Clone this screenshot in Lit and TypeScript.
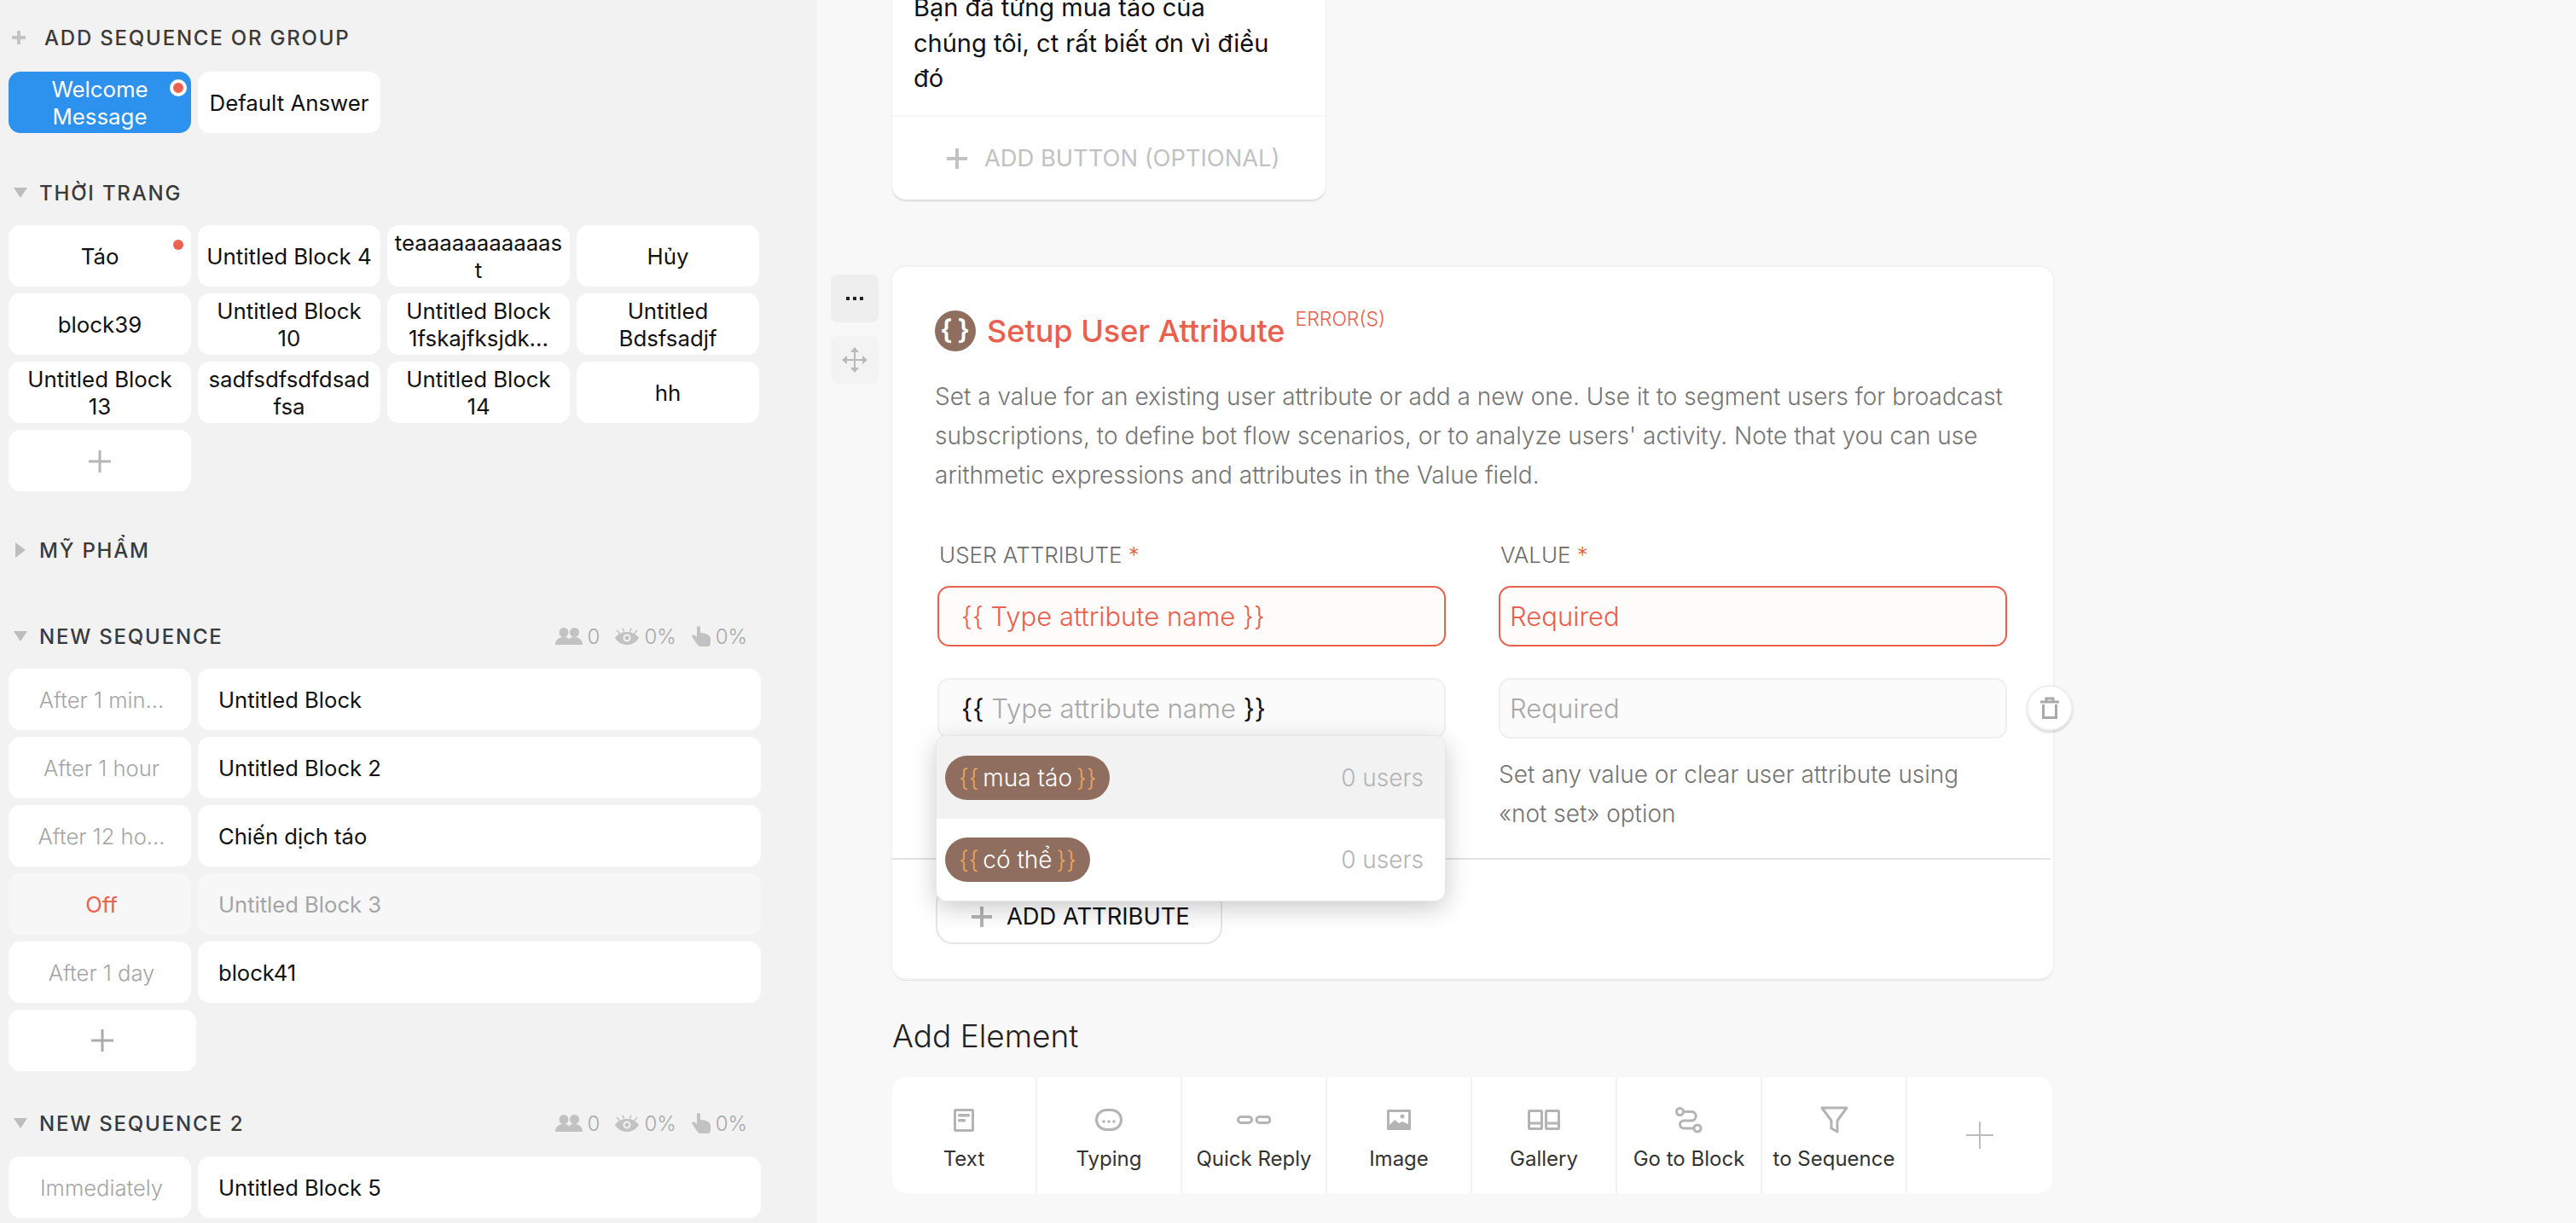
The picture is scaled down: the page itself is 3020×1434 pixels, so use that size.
import { LitElement, html, css, svg } from 'lit';
import { customElement } from 'lit/decorators.js';

const plus = (size: number, weight = 3) => html`<svg class="plus" width=${size} height=${size} viewBox="0 0 ${size} ${size}">
  <path d="M${size / 2} 0V${size}M0 ${size / 2}H${size}" stroke="currentColor" stroke-width=${weight} fill="none" />
</svg>`;

const groupIcon = html`<svg width="32" height="20" viewBox="0 0 32 20" fill="#c2c2c2">
  <circle cx="10" cy="5.500" r="5.500" /><circle cx="22.500" cy="5.500" r="5.500" />
  <path d="M0 20c0-5 3-8 8-9h4c2 .5 3 1.500 4 2.500 1-1 2-2 4-2.500h4c5 1 8 4 8 9z" />
</svg>`;

const eyeIcon = html`<svg width="28" height="20" viewBox="0 0 28 20">
  <path fill-rule="evenodd" fill="#c2c2c2" d="M0 12C4 6.500 9 5 14 5s10 1.500 14 7c-4 6-9 8-14 8S4 18 0 12zm14-4.500a4.500 4.500 0 1 0 0 9 4.500 4.500 0 0 0 0-9z" />
  <circle cx="14" cy="12" r="2.500" fill="#c2c2c2" />
  <path d="M2 3l3.500 4M9 .5l1.500 4M19 .5l-1.500 4M26 3l-3.500 4" stroke="#c2c2c2" stroke-width="1.500" />
</svg>`;

const handIcon = html`<svg width="22" height="24" viewBox="0 0 22 24" fill="#c2c2c2">
  <path d="M6 2a2 2 0 0 1 4 0v6c3 0 8 1 10 3 1 1 2 2 2 4v5c0 2-1 4-3 4H10c-2 0-3-1-4-3L.5 13c-1-2 1-3 3-2L6 13z" />
</svg>`;

const s = '#b4b4b4';
const elementIcons: Record<string, unknown> = {
  text: svg`<rect x="1.500" y="1.500" width="21" height="24" rx="1" fill="none" stroke=${s} stroke-width="3" />
    <rect x="5" y="6" width="14" height="3.500" rx="1.500" fill=${s} /><rect x="5" y="12" width="9" height="3.500" rx="1.500" fill=${s} />`,
  typing: svg`<rect x="1.500" y="1.500" width="29" height="23" rx="11.500" fill="none" stroke=${s} stroke-width="3" />
    <circle cx="10" cy="15" r="1.800" fill=${s} /><circle cx="16" cy="15" r="1.800" fill=${s} /><circle cx="22" cy="15" r="1.800" fill=${s} />`,
  quick: svg`<rect x="1.500" y="1.500" width="16" height="7" rx="3.500" fill="none" stroke=${s} stroke-width="3" />
    <rect x="23" y="1.500" width="16" height="7" rx="3.500" fill="none" stroke=${s} stroke-width="3" />`,
  image: svg`<rect width="28" height="24" rx="1" fill=${s} /><rect x="3" y="3" width="22" height="18" fill="#fff" />
    <circle cx="18" cy="8" r="2.500" fill=${s} /><path d="M3 18l6-6 5 4 4-2 7 3v4H3z" fill=${s} />`,
  gallery: svg`<rect x="1.500" y="1.500" width="15" height="21" rx="1" fill="none" stroke=${s} stroke-width="3" />
    <rect x="21.500" y="1.500" width="15" height="21" rx="1" fill="none" stroke=${s} stroke-width="3" />
    <path d="M2 16H16M22 16H36" stroke=${s} stroke-width="3" />`,
  goto: svg`<circle cx="5.500" cy="5.500" r="4" fill="none" stroke=${s} stroke-width="3" /><circle cx="26" cy="25" r="4" fill="none" stroke=${s} stroke-width="3" />
    <path d="M9.500 5.500H19a5 5 0 0 1 0 10.500H10a4.500 4.500 0 0 0 0 9H22" fill="none" stroke=${s} stroke-width="3" />`,
  filter: svg`<path d="M2 2H31L20 17V30L13 26V17z" fill="none" stroke=${s} stroke-width="3" stroke-linejoin="round" />`,
};

const elements = [
  { label: 'Text', icon: 'text', w: 24, h: 27 },
  { label: 'Typing', icon: 'typing', w: 32, h: 26 },
  { label: 'Quick Reply', icon: 'quick', w: 40, h: 10 },
  { label: 'Image', icon: 'image', w: 28, h: 24 },
  { label: 'Gallery', icon: 'gallery', w: 38, h: 24 },
  { label: 'Go to Block', icon: 'goto', w: 32, h: 31 },
  { label: 'to Sequence', icon: 'filter', w: 33, h: 32 },
];

const fashion: string[][] = [
  ['Táo'], ['Untitled Block 4'], ['teaaaaaaaaaaas', 't'], ['Hủy'],
  ['block39'], ['Untitled Block', '10'], ['Untitled Block', '1fskajfksjdk...'], ['Untitled', 'Bdsfsadjf'],
  ['Untitled Block', '13'], ['sadfsdfsdfdsad', 'fsa'], ['Untitled Block', '14'], ['hh'],
];

const sequence = [
  { delay: 'After 1 min...', name: 'Untitled Block' },
  { delay: 'After 1 hour', name: 'Untitled Block 2' },
  { delay: 'After 12 ho...', name: 'Chiến dịch táo' },
  { delay: 'Off', name: 'Untitled Block 3', off: true },
  { delay: 'After 1 day', name: 'block41' },
];

@customElement('app-root')
export class AppRoot extends LitElement {
  static styles = css`
    :host {
      display: flex;
      width: 3020px;
      height: 1434px;
      overflow: hidden;
      background: #f8f8f8;
      font-family: Inter, 'Liberation Sans', sans-serif;
      color: #111;
    }
    * { box-sizing: border-box; }

    /* sidebar */
    .side {
      width: 958px;
      flex: none;
      background: #f2f2f2;
      padding-left: 10px;
    }
    .head {
      display: flex;
      align-items: center;
      height: 40px;
      font-size: 24px;
      font-weight: 500;
      letter-spacing: 1.8px;
      color: #3a3a3a;
      white-space: nowrap;
    }
    .head .plus { color: #c4c4c4; margin: 0 22px 0 4px; }
    .head-add { margin-top: 24px; }
    .head-fashion { margin-top: 50px; }
    .head-cosmetics { margin-top: 49px; }
    .head-seq { margin-top: 61px; }
    .head-seq2 { margin-top: 41px; }
    .tri { width: 0; height: 0; flex: none; margin: 0 14px 0 6px; border-style: solid; border-color: transparent; }
    .tri.down { border-width: 12px 8px 0; border-top-color: #bdbdbd; }
    .tri.right { border-width: 9px 0 9px 12px; border-left-color: #bdbdbd; margin: 0 16px 0 8px; }
    .stats {
      display: flex;
      align-items: center;
      margin-left: auto;
      margin-right: 82px;
      font-size: 24px;
      font-weight: 300;
      letter-spacing: 0;
      color: #a8a8a8;
      flex: none;
    }
    .stats span { margin: 0 18px 0 6px; }
    .stats span:last-child { margin-right: 0; }
    .tiles { display: grid; grid-template-columns: repeat(4, 214px); gap: 8px; margin-top: 18px; }
    .tiles-add { margin-top: 20px; }
    .tile {
      height: 72px;
      padding-top: 2px;
      background: #fff;
      border-radius: 14px;
      display: flex;
      align-items: center;
      justify-content: center;
      text-align: center;
      font-size: 25.800px;
      line-height: 32px;
      position: relative;
      white-space: nowrap;
    }
    .tile.active { background: #2d91ee; color: #fff; }
    .tile .plus { color: #b6b6b6; }
    .dot {
      position: absolute;
      top: 17px;
      right: 9px;
      width: 12px;
      height: 12px;
      border-radius: 50%;
      background: #ec6250;
    }
    .active .dot { top: 9px; right: 5px; width: 20px; height: 20px; border: 4px solid #fff; }
    .rows { display: grid; grid-template-columns: 214px 660px; gap: 8px; margin-top: 18px; }
    .rows.second { margin-top: 19px; }
    .row-delay, .row-name {
      height: 72px;
      background: #fff;
      border-radius: 14px;
      display: flex;
      align-items: center;
      font-size: 25.600px;
      white-space: nowrap;
    }
    .row-delay { justify-content: center; color: #a5a5a5; padding-left: 4px; font-weight: 300; }
    .row-name { padding-left: 24px; }
    .off.row-delay { background: #f7f7f7; color: #f0614a; font-weight: 400; }
    .off.row-name { background: #f7f7f7; color: #a5a5a5; }
    .seq-add {
      width: 220px;
      height: 72px;
      background: #fff;
      border-radius: 14px;
      display: flex;
      align-items: center;
      justify-content: center;
      color: #ababab;
      margin-top: 8px;
    }

    /* builder */
    .main { flex: 1; padding-left: 88px; }
    .card-top {
      width: 508px;
      height: 234px;
      background: #fff;
      border-radius: 0 0 16px 16px;
      box-shadow: 0 2px 2px rgba(0, 0, 0, 0.12);
      overflow: hidden;
    }
    .bubble-wrap { height: 137px; overflow: hidden; border-bottom: 2px solid #f7f7f7; }
    .bubble {
      margin-top: -12px;
      padding: 0 25px;
      font-size: 29px;
      line-height: 41.500px;
      white-space: nowrap;
    }
    .add-btn {
      display: flex;
      align-items: center;
      height: 97px;
      padding-left: 64px;
      font-size: 27.300px;
      color: #c2c2c2;
      gap: 20px;
    }
    .block { position: relative; margin-top: 79px; width: 1361px; }
    .tools { position: absolute; left: -72px; top: 9px; display: flex; flex-direction: column; gap: 16px; }
    .tool {
      width: 56px;
      height: 56px;
      border-radius: 8px;
      background: #eeeeee;
      display: flex;
      align-items: center;
      justify-content: center;
    }
    .tool.soft { background: #f3f3f3; }
    .card {
      height: 834px;
      background: #fff;
      border-radius: 16px;
      box-shadow: 0 0 0 2px #f2f2f2, 0 2px 0 1px #e3e3e3;
      padding: 51px 50px 0;
      position: relative;
    }
    .title { display: flex; align-items: center; height: 48px; }
    .title-icon {
      width: 48px;
      height: 48px;
      border-radius: 50%;
      background: #8f6e5f;
      color: #fff;
      font-size: 32px;
      font-weight: 600;
      display: flex;
      align-items: center;
      justify-content: center;
      letter-spacing: 6px;
      padding: 0 0 4px 5px;
      flex: none;
    }
    .title h2 { margin: 0 0 0 13px; font-size: 36px; font-weight: 500; color: #e9604f; white-space: nowrap; }
    .title sup { font-size: 23px; color: #e9604f; align-self: flex-start; margin: -3px 0 0 12px; line-height: 26px; font-weight: 300; }
    .desc { margin: 30px 0 0; font-size: 28px; line-height: 46px; color: #757575; width: 1270px; font-weight: 300; }
    .fields { display: grid; grid-template-columns: 596px 596px; column-gap: 62px; margin: 49px 0 0 3px; }
    .label { height: 44px; font-size: 26px; line-height: 44px; color: #6c6c6c; font-weight: 300; padding-left: 2px; white-space: nowrap; }
    .label i { font-style: normal; color: #e9604f; }
    .input {
      height: 71px;
      border-radius: 14px;
      border: 2px solid #efefef;
      background: #fbfbfb;
      display: flex;
      align-items: center;
      font-size: 31px;
      font-weight: 300;
      color: #a8a8a8;
      white-space: nowrap;
      margin-top: 14px;
    }
    .input.err { border-color: #e9604f; background: #fdfcfb; color: #e9604f; }
    .input.attr { padding-left: 26px; }
    .input.val { padding-left: 11px; }
    .input b { font-weight: 400; color: #111; }
    .input.err b { color: #e9604f; font-weight: 300; }
    .input.second-row { margin-top: 37px; }
    .second-cell { position: relative; }
    .trash {
      position: absolute;
      right: -77px;
      top: 45px;
      width: 54px;
      height: 54px;
      border-radius: 50%;
      background: #fff;
      border: 2px solid #eee;
      box-shadow: 0 2px 3px rgba(0, 0, 0, 0.16);
      display: flex;
      align-items: center;
      justify-content: center;
    }
    .help { margin: 19px 0 0; font-size: 28px; line-height: 46px; color: #757575; font-weight: 300; width: 570px; }
    .menu {
      position: absolute;
      left: 52px;
      top: 550px;
      width: 596px;
      height: 193px;
      background: #fff;
      border-radius: 12px;
      box-shadow: 0 0 0 1px #e6e6e6, 0 8px 30px rgba(0, 0, 0, 0.22);
      overflow: hidden;
      z-index: 2;
    }
    .opt { height: 97px; display: flex; align-items: center; justify-content: space-between; padding: 0 25px 0 10px; }
    .opt.hover { background: #f2f2f2; }
    .opt + .opt { height: 96px; }
    .pill {
      height: 52px;
      border-radius: 26px;
      background: #8f6e5f;
      color: #fff;
      display: flex;
      align-items: center;
      padding: 0 16px;
      font-size: 28px;
      font-weight: 300;
      gap: 5px;
    }
    .pill em { font-style: normal; color: #eba45c; }
    .users { color: #b4b4b4; font-size: 28px; font-weight: 300; }
    .rule { position: absolute; left: 0; right: 3px; top: 693px; height: 2px; background: #e3e3e3; }
    .add-attr {
      position: absolute;
      left: 51px;
      top: 727px;
      width: 336px;
      height: 67px;
      border: 2px solid #e6e6e6;
      border-radius: 20px;
      display: flex;
      align-items: center;
      padding: 2px 0 0 40px;
      gap: 17px;
      font-size: 27.300px;
      color: #111;
    }
    .add-attr .plus { color: #b4b4b4; }
    .add-title { margin-top: 41px; height: 54px; font-size: 37px; font-weight: 300; line-height: 54px; color: #222; }
    .bar { display: flex; width: 1360px; height: 136px; margin-top: 21px; background: #fff; border-radius: 16px; overflow: hidden; }
    .cell {
      width: 170px;
      flex: none;
      border-right: 2px solid #f2f2f2;
      display: flex;
      flex-direction: column;
      align-items: center;
      color: #333;
      font-size: 24px;
      white-space: nowrap;
    }
    .cell:last-child { border-right: 0; justify-content: center; color: #bdbdbd; }
    .cell .ico { height: 32px; margin-top: 34px; display: flex; align-items: center; }
    .cell label { margin-top: 15px; font-weight: 400; }
  `;

  render() {
    return html`
      <aside class="side">
        <div class="head head-add">${plus(16, 4)}ADD SEQUENCE OR GROUP</div>
        <div class="tiles tiles-add">
          <div class="tile active">Welcome<br />Message<i class="dot"></i></div>
          <div class="tile">Default Answer</div>
        </div>

        <div class="head head-fashion"><i class="tri down"></i>THỜI TRANG</div>
        <div class="tiles">
          ${fashion.map(
            (lines, i) => html`<div class="tile">
              <div>${lines.map((l, j) => html`${j ? html`<br />` : ''}${l}`)}</div>
              ${i === 0 ? html`<i class="dot"></i>` : ''}
            </div>`,
          )}
          <div class="tile">${plus(26, 3)}</div>
        </div>

        <div class="head head-cosmetics"><i class="tri right"></i>MỸ PHẨM</div>

        <div class="head head-seq"><i class="tri down"></i>NEW SEQUENCE${this.stats()}</div>
        <div class="rows">
          ${sequence.map(
            (r) => html`
              <div class="row-delay ${r.off ? 'off' : ''}">${r.delay}</div>
              <div class="row-name ${r.off ? 'off' : ''}">${r.name}</div>
            `,
          )}
        </div>
        <div class="seq-add">${plus(26, 3)}</div>

        <div class="head head-seq2"><i class="tri down"></i>NEW SEQUENCE 2${this.stats()}</div>
        <div class="rows second">
          <div class="row-delay">Immediately</div>
          <div class="row-name">Untitled Block 5</div>
        </div>
      </aside>

      <main class="main">
        <div class="card-top">
          <div class="bubble-wrap">
            <div class="bubble">Bạn đã từng mua táo của<br />chúng tôi, ct rất biết ơn vì điều<br />đó</div>
          </div>
          <div class="add-btn">${plus(24, 4)}ADD BUTTON (OPTIONAL)</div>
        </div>

        <div class="block">
          <div class="tools">
            <div class="tool">
              <svg width="20" height="4" viewBox="0 0 20 4" fill="#222"><rect width="4" height="4" /><rect x="8" width="4" height="4" /><rect x="16" width="4" height="4" /></svg>
            </div>
            <div class="tool soft">
              <svg width="30" height="30" viewBox="0 0 30 30" fill="#b9b9b9">
                <path d="M15 0l5 6h-4v8h8v-4l6 5-6 5v-4h-8v8h4l-5 6-5-6h4v-8H6v4l-6-5 6-5v4h8V6h-4z" />
              </svg>
            </div>
          </div>

          <div class="card">
            <div class="title">
              <div class="title-icon">{}</div>
              <h2>Setup User Attribute</h2>
              <sup>ERROR(S)</sup>
            </div>
            <p class="desc">
              Set a value for an existing user attribute or add a new one. Use it to segment users for broadcast
              subscriptions, to define bot flow scenarios, or to analyze users' activity. Note that you can use
              arithmetic expressions and attributes in the Value field.
            </p>
            <div class="fields">
              <div class="label">USER ATTRIBUTE <i>*</i></div>
              <div class="label">VALUE <i>*</i></div>
              <div class="input attr err"><b>{{</b>&nbsp;Type attribute name&nbsp;<b>}}</b></div>
              <div class="input val err">Required</div>
              <div class="input attr second-row"><b>{{</b>&nbsp;Type attribute name&nbsp;<b>}}</b></div>
              <div class="second-cell">
                <div class="input val second-row">Required</div>
                <div class="trash">
                  <svg width="22" height="26" viewBox="0 0 22 26" fill="none" stroke="#a9a9a9" stroke-width="3">
                    <path d="M0 6H22M7 6V2h8v4M3.500 9V24.500H18.500V9" />
                  </svg>
                </div>
                <p class="help">Set any value or clear user attribute using «not set» option</p>
              </div>
            </div>

            <div class="rule"></div>
            <div class="add-attr">${plus(24, 4)}ADD ATTRIBUTE</div>

            <div class="menu">
              <div class="opt hover">
                <div class="pill"><em>{{</em>mua táo<em>}}</em></div>
                <div class="users">0 users</div>
              </div>
              <div class="opt">
                <div class="pill"><em>{{</em>có thể<em>}}</em></div>
                <div class="users">0 users</div>
              </div>
            </div>
          </div>
        </div>

        <div class="add-title">Add Element</div>
        <div class="bar">
          ${elements.map(
            (e) => html`<div class="cell">
              <div class="ico">
                <svg width=${e.w} height=${e.h} viewBox="0 0 ${e.w} ${e.h}">${elementIcons[e.icon]}</svg>
              </div>
              <label>${e.label}</label>
            </div>`,
          )}
          <div class="cell">${plus(32, 2)}</div>
        </div>
      </main>
    `;
  }

  stats() {
    return html`<div class="stats">
      ${groupIcon}<span>0</span>${eyeIcon}<span>0%</span>${handIcon}<span>0%</span>
    </div>`;
  }
}
